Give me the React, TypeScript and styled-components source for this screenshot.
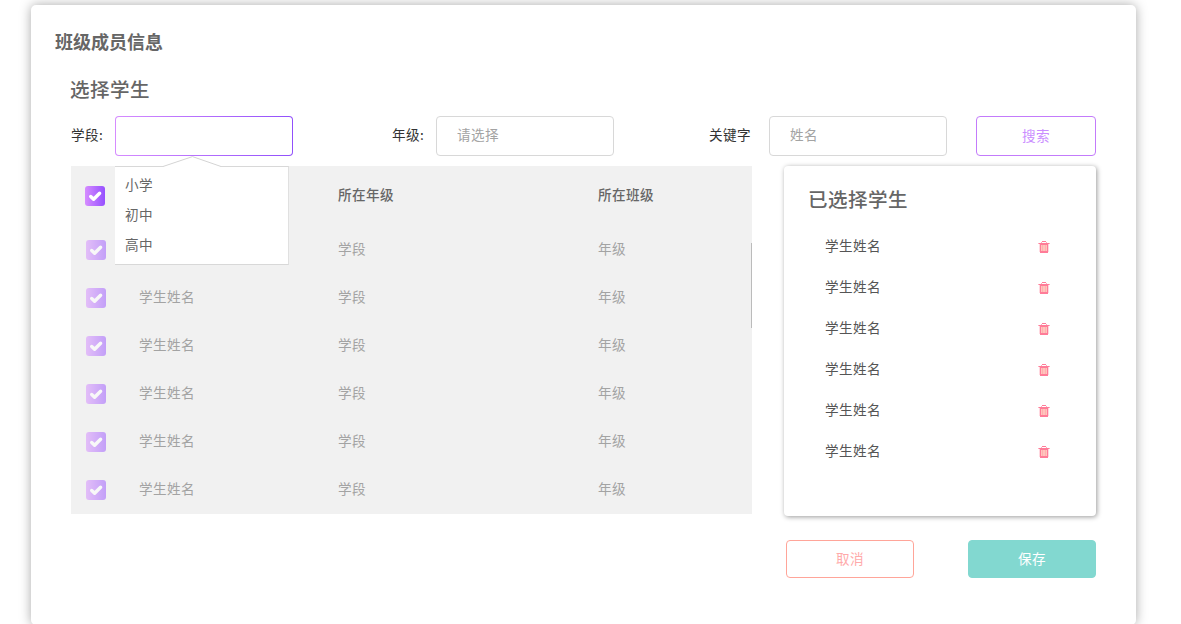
import React from "react";
import styled, { createGlobalStyle, css } from "styled-components";

const GlobalStyle = createGlobalStyle`
  * { box-sizing: border-box; }
  html, body { margin: 0; background: #fff; }
  body {
    height: 624px;
    overflow: hidden;
    font: 13.6px/20px "Noto Sans CJK SC", sans-serif;
    letter-spacing: 0.4px;
    color: #333;
  }
  button, input { font: inherit; letter-spacing: inherit; }
`;

const Card = styled.main`
  width: 1105px;
  height: 620px;
  margin: 5px 0 0 31px;
  padding: 21px 40px 0 24px;
  border-radius: 5px;
  background: #fff;
  box-shadow: 0 0 12px rgba(0, 0, 0, 0.34);
`;

const PageTitle = styled.h1`
  margin: 0;
  font-size: 18px;
  line-height: 30px;
  font-weight: 700;
  letter-spacing: 0;
  color: #666;
`;

const Content = styled.div`
  padding-left: 16px;
`;

const Heading = styled.h2`
  margin: 0;
  font-size: 19.5px;
  line-height: 30px;
  font-weight: 500;
  letter-spacing: 0.5px;
  color: #666;
`;

const SectionHeading = styled(Heading)`
  margin: 18px 0 12px -1px;
`;

const Filters = styled.div`
  display: flex;
  height: 40px;
`;

const Field = styled.label<{ $labelWidth: number; $gap: number }>`
  display: grid;
  grid-template-columns: ${(p) => p.$labelWidth}px 178px;
  align-items: center;
  margin-right: ${(p) => p.$gap}px;
  white-space: nowrap;
`;

const LabelText = styled.span`
  padding-bottom: 4px;
`;

const InputWrap = styled.span`
  position: relative;
  display: block;
  height: 40px;
`;

const Input = styled.input<{ $active?: boolean }>`
  display: block;
  width: 178px;
  height: 40px;
  padding: 0 20px 4px;
  border: 1px solid #d8d8d8;
  border-radius: 4px;
  outline: none;
  color: #333;
  background: #fff;
  &::placeholder { color: #a3a3a3; opacity: 1; }
  ${(p) =>
    p.$active &&
    css`
      border-color: transparent;
      background: linear-gradient(#fff, #fff) padding-box,
        linear-gradient(90deg, #d68cff, #9150fb) border-box;
    `}
`;

const Menu = styled.span`
  position: absolute;
  z-index: 2;
  top: 50px;
  left: 0;
  width: 174px;
  height: 99px;
  padding: 3px 10px;
  background: #fff;
  border: solid #d8d8d8;
  border-width: 1px 1px 1px 0;
  border-right-color: #e0e0e0;
`;

const MenuArrow = styled.svg`
  position: absolute;
  top: -11px;
  left: 48px;
`;

const MenuItem = styled.span`
  display: block;
  height: 30px;
  line-height: 29px;
  color: #666;
`;

const Button = styled.button<{ $kind: "search" | "cancel" | "save" }>`
  width: ${(p) => (p.$kind === "search" ? 120 : 128)}px;
  height: ${(p) => (p.$kind === "search" ? 40 : 38)}px;
  padding: 0 0 3px;
  border: 1px solid;
  border-radius: 4px;
  ${(p) =>
    ({
      search: css`background: #fff; border-color: #c37bfb; color: #ca8dff;`,
      cancel: css`background: #fff; border-color: #ffa599; color: #ffaaaa;`,
      save: css`background: #82d8d0; border-color: #82d8d0; color: #fff;`,
    })[p.$kind]}
`;

const Panels = styled.div`
  display: flex;
  gap: 32px;
  margin-top: 10px;
`;

const Table = styled.section`
  display: flex;
  width: 681px;
  height: 348px;
  background: #f1f1f1;
`;

const Rows = styled.div`
  width: 680px;
`;

const Row = styled.div<{ $head?: boolean }>`
  display: grid;
  grid-template-columns: ${(p) => (p.$head ? 54 : 53)}px 199px 260px 1fr;
  align-items: center;
  height: ${(p) => (p.$head ? 60 : 48)}px;
  padding-left: ${(p) => (p.$head ? 14 : 15)}px;
  font-weight: ${(p) => (p.$head ? 500 : 400)};
  color: ${(p) => (p.$head ? "#666" : "#a3a3a3")};
`;

const Cell = styled.span`
  padding-bottom: 4px;
`;

const Check = styled.span<{ $muted?: boolean }>`
  display: flex;
  width: 20px;
  height: 20px;
  border-radius: 3px;
  background: linear-gradient(90deg, #d68cff, #9650ff);
  opacity: ${(p) => (p.$muted ? 0.5 : 1)};
`;

const ScrollThumb = styled.div`
  width: 1px;
  height: 85px;
  margin-top: 77px;
  background: #bbb;
`;

const Selected = styled.section`
  width: 312px;
  height: 350px;
  padding: 18px 46px 0 24px;
  border-radius: 4px;
  background: #fff;
  box-shadow: 1px 1px 5px rgba(0, 0, 0, 0.4);
`;

const SelectedRow = styled.div`
  display: flex;
  justify-content: space-between;
  align-items: center;
  height: 41px;
  padding-left: 17px;
  color: #555;
`;

const SelectedList = styled.div`
  padding-top: 12px;
`;

const Actions = styled.div`
  display: flex;
  justify-content: flex-end;
  gap: 54px;
  margin-top: 24px;
`;

const CheckMark = ({ muted }: { muted?: boolean }) => (
  <Check $muted={muted}>
    <svg width="20" height="20" viewBox="0 0 20 20">
      <path d="M5.7 10.5 8.6 13.3 14.6 7.2" fill="none" stroke="#fff" strokeWidth="3.4" strokeLinecap="round" strokeLinejoin="round" />
    </svg>
  </Check>
);

const Trash = () => (
  <svg width="12" height="14" viewBox="0 0 12 14" shapeRendering="crispEdges">
    <path d="M2 4h8v9H2z" fill="#ffc4bd" />
    <path d="M4 1h4v1H4zM1 3h10v1H1zM2 4h8v1H2zM2 5h1v6H2zM9 5h1v6H9zM2 11h8v2H2z" fill="#ff7c98" />
    <path d="M3 2h1v1H3zM8 2h1v1H8zM0 3h1v1H0zM11 3h1v1h-1z" fill="#ffb0c0" />
    <path d="M4 5h1v6H4zM7 5h1v6H7z" fill="#ffb0ae" />
    <path d="M1 4h1v8H1zM10 4h1v8h-1z" fill="#ffd8e0" />
  </svg>
);

const students = ["", "学生姓名", "学生姓名", "学生姓名", "学生姓名", "学生姓名"];
const chosen = Array<string>(6).fill("学生姓名");

export default function App() {
  return (
    <>
      <GlobalStyle />
      <Card>
        <PageTitle>班级成员信息</PageTitle>
        <Content>
          <SectionHeading>选择学生</SectionHeading>
          <Filters>
            <Field $labelWidth={44} $gap={99}>
              <LabelText>学段:</LabelText>
              <InputWrap>
                <Input $active />
                <Menu>
                  <MenuArrow width="60" height="12" viewBox="0 0 60 12">
                    <path d="M0 10.5 29.5.6 58 10.5V12H0Z" fill="#fff" />
                    <path d="M0 10.5 29.5.6 58 10.5" fill="none" stroke="#d4d4d4" />
                  </MenuArrow>
                  {["小学", "初中", "高中"].map((name) => (
                    <MenuItem key={name}>{name}</MenuItem>
                  ))}
                </Menu>
              </InputWrap>
            </Field>
            <Field $labelWidth={44} $gap={95}>
              <LabelText>年级:</LabelText>
              <Input placeholder="请选择" />
            </Field>
            <Field $labelWidth={60} $gap={29}>
              <LabelText>关键字</LabelText>
              <Input placeholder="姓名" />
            </Field>
            <Button $kind="search">搜索</Button>
          </Filters>
          <Panels>
            <Table>
              <Rows>
                <Row $head>
                  <CheckMark />
                  <Cell />
                  <Cell>所在年级</Cell>
                  <Cell>所在班级</Cell>
                </Row>
                {students.map((name, i) => (
                  <Row key={i}>
                    <CheckMark muted />
                    <Cell>{name}</Cell>
                    <Cell>学段</Cell>
                    <Cell>年级</Cell>
                  </Row>
                ))}
              </Rows>
              <ScrollThumb />
            </Table>
            <Selected>
              <Heading>已选择学生</Heading>
              <SelectedList>
                {chosen.map((name, i) => (
                  <SelectedRow key={i}>
                    <Cell>{name}</Cell>
                    <Trash />
                  </SelectedRow>
                ))}
              </SelectedList>
            </Selected>
          </Panels>
          <Actions>
            <Button $kind="cancel">取消</Button>
            <Button $kind="save">保存</Button>
          </Actions>
        </Content>
      </Card>
    </>
  );
}
